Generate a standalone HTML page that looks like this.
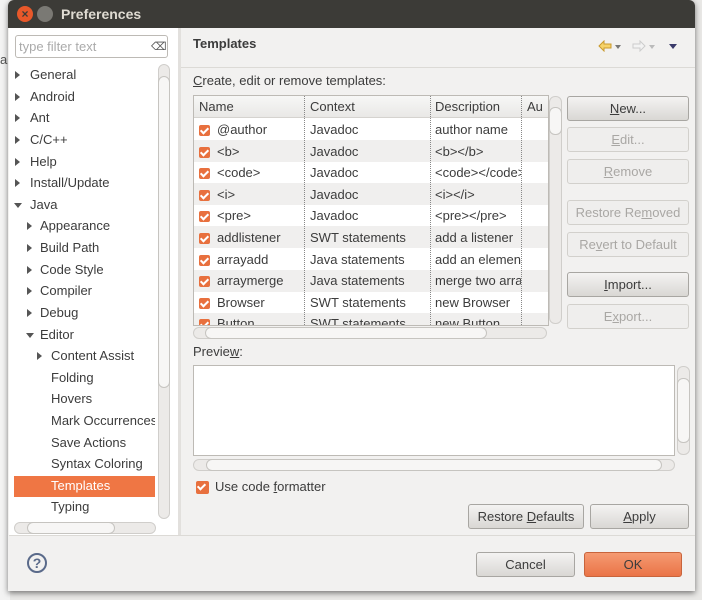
<!DOCTYPE html>
<html><head><meta charset="utf-8"><style>
*{box-sizing:border-box;margin:0;padding:0}
body{width:702px;height:600px;overflow:hidden;background:#e9e8e6;font-family:"Liberation Sans",sans-serif;font-size:13px;color:#3c3c3c;position:relative}
.a{position:absolute}
.t{position:absolute;white-space:nowrap;line-height:16px}
.btn{position:absolute;border:1px solid #a8a6a2;border-radius:3px;background:linear-gradient(#f4f3f2,#d9d7d4);text-align:center;line-height:23px;color:#3c3c3c}
.dis{border-color:#d2d0cc;background:#efeeed;color:#a9a7a4}
.cb{position:absolute;width:11px;height:11px;background:#e8703e;border-radius:2px}
.cb:after{content:"";position:absolute;left:3px;top:1px;width:3px;height:6px;border:solid #fff;border-width:0 2px 2px 0;transform:rotate(45deg)}
.arr{position:absolute;width:0;height:0;border-top:4px solid transparent;border-bottom:4px solid transparent;border-left:5px solid #555}
.darr{position:absolute;width:0;height:0;border-left:4px solid transparent;border-right:4px solid transparent;border-top:5px solid #555}
.sb{position:absolute;border:1px solid #d0cecb;border-radius:6px;background:#eceae8}
.th{position:absolute;border:1px solid #c6c4c0;border-radius:6px;background:#f7f6f5}
u{text-decoration:underline}
</style></head><body>
<div class="a" style="left:0;top:0;width:10px;height:600px;background:#f3f3f3"></div>
<div class="t" style="left:0;top:52px;color:#555">a</div>
<div class="a" style="left:8px;top:0;width:687px;height:591px;background:#f2f1f0;border-radius:6px 6px 0 0;box-shadow:0 2px 6px rgba(0,0,0,.5)"></div>
<div class="a" style="left:8px;top:0;width:687px;height:28px;background:#3c3b37;border-radius:6px 6px 0 0"></div>
<div class="a" style="left:17px;top:6px;width:16px;height:16px;border-radius:50%;background:#e8582a;color:#3c3b37;font-size:12px;font-weight:bold;text-align:center;line-height:16px">×</div>
<div class="a" style="left:37px;top:6px;width:16px;height:16px;border-radius:50%;background:#7a7974"></div>
<div class="t" style="left:61px;top:6px;color:#dfdbd2;font-weight:bold;font-size:14px">Preferences</div>

<!-- left panel -->
<div class="a" style="left:9px;top:28px;width:169px;height:507px;background:#fff"></div>
<div class="a" style="left:15px;top:35px;width:153px;height:23px;border:1px solid #bdbab5;border-radius:3px;background:#fff"></div>
<div class="t" style="left:19px;top:39px;color:#aaa">type filter text</div>
<div class="t" style="left:151px;top:39px;color:#555;font-size:11px">⌫</div>
<div class="sb" style="left:158px;top:64px;width:12px;height:455px"></div>
<div class="th" style="left:158px;top:76px;width:12px;height:312px"></div>
<div class="sb" style="left:14px;top:522px;width:142px;height:12px"></div>
<div class="th" style="left:27px;top:522px;width:88px;height:12px"></div>
<div class="a" style="left:14px;top:476px;width:141px;height:21px;background:#ef7644"></div>
<div class="a" style="left:178px;top:28px;width:3px;height:507px;background:#e2e0dd"></div>

<!-- tree -->
<div class="arr" style="left:15px;top:71px"></div><div class="t" style="left:30px;top:67px">General</div>
<div class="arr" style="left:15px;top:93px"></div><div class="t" style="left:30px;top:89px">Android</div>
<div class="arr" style="left:15px;top:114px"></div><div class="t" style="left:30px;top:110px">Ant</div>
<div class="arr" style="left:15px;top:136px"></div><div class="t" style="left:30px;top:132px">C/C++</div>
<div class="arr" style="left:15px;top:158px"></div><div class="t" style="left:30px;top:154px">Help</div>
<div class="arr" style="left:15px;top:179px"></div><div class="t" style="left:30px;top:175px">Install/Update</div>
<div class="darr" style="left:14px;top:203px"></div><div class="t" style="left:30px;top:197px">Java</div>
<div class="arr" style="left:27px;top:222px"></div><div class="t" style="left:40px;top:218px">Appearance</div>
<div class="arr" style="left:27px;top:244px"></div><div class="t" style="left:40px;top:240px">Build Path</div>
<div class="arr" style="left:27px;top:266px"></div><div class="t" style="left:40px;top:262px">Code Style</div>
<div class="arr" style="left:27px;top:287px"></div><div class="t" style="left:40px;top:283px">Compiler</div>
<div class="arr" style="left:27px;top:309px"></div><div class="t" style="left:40px;top:305px">Debug</div>
<div class="darr" style="left:26px;top:333px"></div><div class="t" style="left:40px;top:327px">Editor</div>
<div class="arr" style="left:37px;top:352px"></div><div class="t" style="left:51px;top:348px">Content Assist</div>
<div class="t" style="left:51px;top:370px">Folding</div>
<div class="t" style="left:51px;top:391px">Hovers</div>
<div class="t" style="left:51px;top:413px;width:104px;overflow:hidden">Mark Occurrences</div>
<div class="t" style="left:51px;top:435px">Save Actions</div>
<div class="t" style="left:51px;top:456px">Syntax Coloring</div>
<div class="t" style="left:51px;top:478px;color:#fff">Templates</div>
<div class="t" style="left:51px;top:499px">Typing</div>

<!-- right header -->
<div class="t" style="left:193px;top:36px;font-weight:bold">Templates</div>
<svg class="a" style="left:598px;top:40px" width="84" height="12"><path d="M1 6 L6 1 L6 4 L13 4 L13 8 L6 8 L6 11 Z" fill="#f6d36a" stroke="#c99a2e"/><path d="M17 5 L23 5 L20 9Z" fill="#777"/><path d="M47 6 L42 1 L42 4 L35 4 L35 8 L42 8 L42 11 Z" fill="#f3f3f3" stroke="#ccc"/><path d="M51 5 L57 5 L54 9Z" fill="#bbb"/><path d="M71 4 L79 4 L75 9Z" fill="#3a3a6a"/></svg>
<div class="a" style="left:181px;top:67px;width:514px;height:1px;background:#dcdad6"></div>
<div class="t" style="left:193px;top:73px"><u>C</u>reate, edit or remove templates:</div>

<!-- table -->
<div class="a" style="left:193px;top:95px;width:356px;height:231px;border:1px solid #bdbab5;background:#fff;overflow:hidden">
<div class="a" style="left:0;top:0;width:356px;height:22px;background:linear-gradient(#f7f7f6,#e9e8e6);border-bottom:1px solid #d5d3cf"></div>
<div class="t" style="left:5px;top:3px">Name</div><div class="t" style="left:116px;top:3px">Context</div><div class="t" style="left:241px;top:3px">Description</div><div class="t" style="left:333px;top:3px">Au</div>
<div class="a" style="left:0;top:44px;width:356px;height:21.6px;background:#f0efee"></div>
<div class="a" style="left:0;top:87px;width:356px;height:21.6px;background:#f0efee"></div>
<div class="a" style="left:0;top:130px;width:356px;height:21.6px;background:#f0efee"></div>
<div class="a" style="left:0;top:174px;width:356px;height:21.6px;background:#f0efee"></div>
<div class="a" style="left:0;top:217px;width:356px;height:21.6px;background:#f0efee"></div>
<div class="a" style="left:110px;top:0;height:231px;border-left:1px dotted #888"></div>
<div class="a" style="left:236px;top:0;height:231px;border-left:1px dotted #888"></div>
<div class="a" style="left:327px;top:0;height:231px;border-left:1px dotted #888"></div>
<div class="a" style="left:0;top:26px;width:356px">
<div style="position:relative;height:21.6px"><div class="cb" style="left:5px;top:3px"></div><div class="t" style="left:23px;top:0">@author</div><div class="t" style="left:116px">Javadoc</div><div class="t" style="left:241px">author name</div></div>
<div style="position:relative;height:21.6px"><div class="cb" style="left:5px;top:3px"></div><div class="t" style="left:23px">&lt;b&gt;</div><div class="t" style="left:116px">Javadoc</div><div class="t" style="left:241px">&lt;b&gt;&lt;/b&gt;</div></div>
<div style="position:relative;height:21.6px"><div class="cb" style="left:5px;top:3px"></div><div class="t" style="left:23px">&lt;code&gt;</div><div class="t" style="left:116px">Javadoc</div><div class="t" style="left:241px;width:86px;overflow:hidden">&lt;code&gt;&lt;/code&gt;</div></div>
<div style="position:relative;height:21.6px"><div class="cb" style="left:5px;top:3px"></div><div class="t" style="left:23px">&lt;i&gt;</div><div class="t" style="left:116px">Javadoc</div><div class="t" style="left:241px">&lt;i&gt;&lt;/i&gt;</div></div>
<div style="position:relative;height:21.6px"><div class="cb" style="left:5px;top:3px"></div><div class="t" style="left:23px">&lt;pre&gt;</div><div class="t" style="left:116px">Javadoc</div><div class="t" style="left:241px">&lt;pre&gt;&lt;/pre&gt;</div></div>
<div style="position:relative;height:21.6px"><div class="cb" style="left:5px;top:3px"></div><div class="t" style="left:23px">addlistener</div><div class="t" style="left:116px">SWT statements</div><div class="t" style="left:241px;width:86px;overflow:hidden">add a listener</div></div>
<div style="position:relative;height:21.6px"><div class="cb" style="left:5px;top:3px"></div><div class="t" style="left:23px">arrayadd</div><div class="t" style="left:116px">Java statements</div><div class="t" style="left:241px;width:86px;overflow:hidden">add an element</div></div>
<div style="position:relative;height:21.6px"><div class="cb" style="left:5px;top:3px"></div><div class="t" style="left:23px">arraymerge</div><div class="t" style="left:116px">Java statements</div><div class="t" style="left:241px;width:86px;overflow:hidden">merge two arrays</div></div>
<div style="position:relative;height:21.6px"><div class="cb" style="left:5px;top:3px"></div><div class="t" style="left:23px">Browser</div><div class="t" style="left:116px">SWT statements</div><div class="t" style="left:241px">new Browser</div></div>
<div style="position:relative;height:21.6px"><div class="cb" style="left:5px;top:3px"></div><div class="t" style="left:23px">Button</div><div class="t" style="left:116px">SWT statements</div><div class="t" style="left:241px">new Button</div></div>
</div></div>
<div class="sb" style="left:549px;top:96px;width:13px;height:228px"></div>
<div class="th" style="left:549px;top:107px;width:13px;height:28px"></div>
<div class="sb" style="left:193px;top:327px;width:354px;height:12px"></div>
<div class="th" style="left:205px;top:327px;width:282px;height:12px"></div>

<!-- side buttons -->
<div class="btn" style="left:567px;top:96px;width:122px;height:25px"><u>N</u>ew...</div>
<div class="btn dis" style="left:567px;top:127px;width:122px;height:25px"><u>E</u>dit...</div>
<div class="btn dis" style="left:567px;top:159px;width:122px;height:25px"><u>R</u>emove</div>
<div class="btn dis" style="left:567px;top:200px;width:122px;height:25px">Restore Re<u>m</u>oved</div>
<div class="btn dis" style="left:567px;top:232px;width:122px;height:25px">Re<u>v</u>ert to Default</div>
<div class="btn" style="left:567px;top:272px;width:122px;height:25px"><u>I</u>mport...</div>
<div class="btn dis" style="left:567px;top:304px;width:122px;height:25px">E<u>x</u>port...</div>

<!-- preview -->
<div class="t" style="left:193px;top:344px">Previe<u>w</u>:</div>
<div class="a" style="left:193px;top:365px;width:482px;height:91px;border:1px solid #bdbab5;background:#fff"></div>
<div class="sb" style="left:677px;top:366px;width:13px;height:89px"></div>
<div class="th" style="left:677px;top:378px;width:13px;height:65px"></div>
<div class="sb" style="left:193px;top:459px;width:482px;height:12px"></div>
<div class="th" style="left:206px;top:459px;width:456px;height:12px"></div>
<div class="cb" style="left:196px;top:481px;width:13px;height:13px"></div>
<div class="t" style="left:215px;top:479px">Use code <u>f</u>ormatter</div>
<div class="btn" style="left:468px;top:504px;width:116px;height:25px">Restore <u>D</u>efaults</div>
<div class="btn" style="left:590px;top:504px;width:99px;height:25px"><u>A</u>pply</div>

<!-- bottom -->
<div class="a" style="left:9px;top:535px;width:686px;height:1px;background:#dcdad6"></div>
<div class="a" style="left:27px;top:553px;width:20px;height:20px;border:2px solid #5a6a8a;border-radius:50%;text-align:center;font-weight:bold;color:#5a6a8a;line-height:16px;font-size:14px">?</div>
<div class="btn" style="left:476px;top:552px;width:99px;height:25px;line-height:24px">Cancel</div>
<div class="btn" style="left:584px;top:552px;width:98px;height:25px;line-height:24px;background:linear-gradient(#f59a72,#ea7447);border-color:#c8643c">OK</div>
</body></html>
